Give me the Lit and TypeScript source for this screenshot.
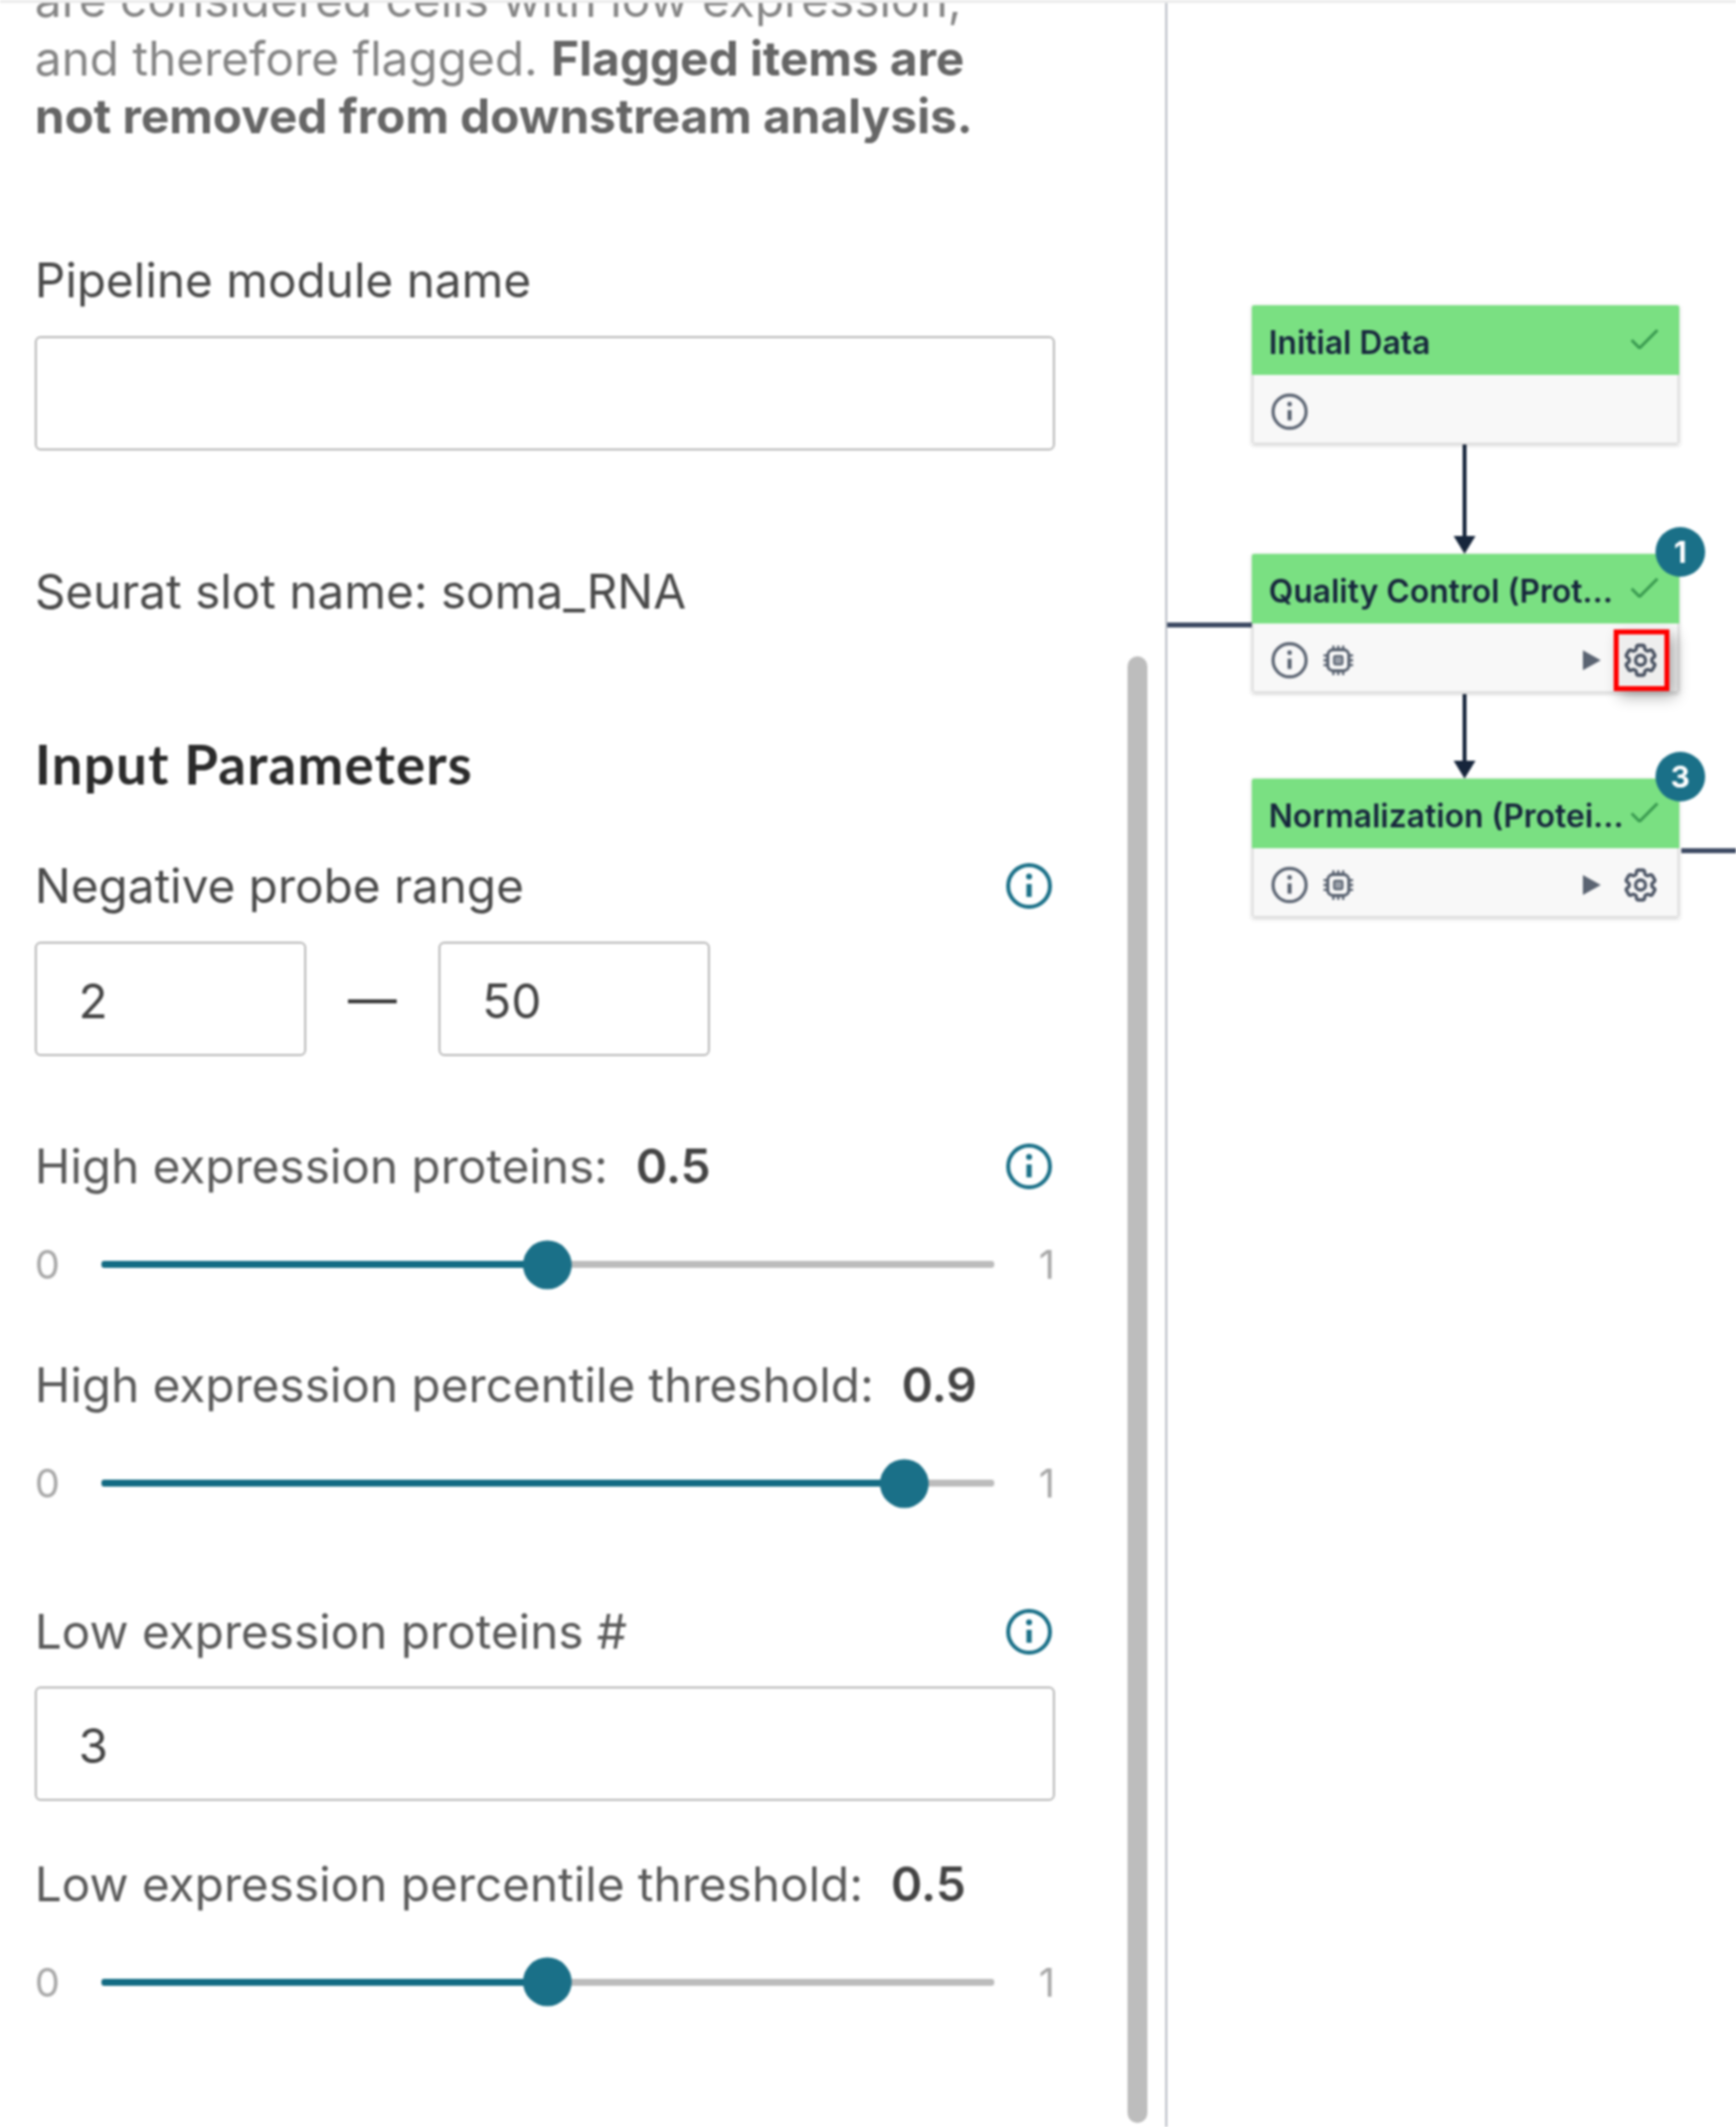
import { LitElement, html, css, svg } from "lit";
import { customElement } from "lit/decorators.js";
import { styleMap } from "lit/directives/style-map.js";

const infoIcon = (cls: string) => html`<svg class=${cls} viewBox="0 0 24 24" fill="none" stroke="currentColor" stroke-width="2">
  <circle cx="12" cy="12" r="10.5"></circle>
  <path d="M12 11v6.5" stroke-width="2.6"></path>
  <circle cx="12" cy="7.2" r="1.5" fill="currentColor" stroke="none"></circle>
</svg>`;

const chipIcon = html`<svg class="chip" viewBox="0 0 24 24" fill="none" stroke="#5b6472" stroke-width="2.2">
  <rect x="4.5" y="4.5" width="15" height="15" rx="4"></rect>
  <rect x="9" y="9" width="6" height="6" rx="1" fill="#9aa0aa" stroke-width="1.4"></rect>
  <path d="M8.5 1.5v3M12 1.5v3M15.5 1.5v3M8.5 19.5v3M12 19.5v3M15.5 19.5v3M1.5 8.5h3M1.5 12h3M1.5 15.5h3M19.5 8.5h3M19.5 12h3M19.5 15.5h3" stroke-width="1.6"></path>
</svg>`;

const gearIcon = html`<svg class="gear" viewBox="0 0 24 24" fill="none" stroke="#4d5666" stroke-width="2">
  <path d="M9.594 3.94c.09-.542.56-.94 1.11-.94h2.593c.55 0 1.02.398 1.11.94l.213 1.281c.063.374.313.686.645.87.074.04.147.083.22.127.325.196.72.257 1.075.124l1.217-.456a1.125 1.125 0 0 1 1.37.49l1.296 2.247a1.125 1.125 0 0 1-.26 1.431l-1.003.827c-.293.241-.438.613-.43.992a7.723 7.723 0 0 1 0 .255c-.008.378.137.75.43.991l1.004.827c.424.35.534.955.26 1.43l-1.298 2.247a1.125 1.125 0 0 1-1.369.491l-1.217-.456c-.355-.133-.75-.072-1.076.124a6.47 6.47 0 0 1-.22.128c-.331.183-.581.495-.644.869l-.213 1.281c-.09.543-.56.94-1.11.94h-2.594c-.55 0-1.019-.398-1.11-.94l-.213-1.281c-.062-.374-.312-.686-.644-.87a6.52 6.52 0 0 1-.22-.127c-.325-.196-.72-.257-1.076-.124l-1.217.456a1.125 1.125 0 0 1-1.369-.49l-1.297-2.247a1.125 1.125 0 0 1 .26-1.431l1.004-.827c.292-.24.437-.613.43-.991a6.932 6.932 0 0 1 0-.255c.007-.38-.138-.751-.43-.992l-1.004-.827a1.125 1.125 0 0 1-.26-1.43l1.297-2.247a1.125 1.125 0 0 1 1.37-.491l1.216.456c.356.133.751.072 1.076-.124.072-.044.146-.086.22-.128.332-.183.582-.495.644-.869l.214-1.28Z"></path>
  <circle cx="12" cy="12" r="3"></circle>
</svg>`;

const playIcon = html`<svg class="play" viewBox="0 0 18 20"><path d="M0 0l18 10L0 20z" fill="#5b6472"></path></svg>`;
const checkIcon = html`<svg class="check" viewBox="0 0 28 20" fill="none" stroke="#3a9a50" stroke-width="3"><path d="M1 11l8 8L27 1"></path></svg>`;

interface NodeData { title: string; top: number; full: boolean; badge?: string; marked?: boolean; }
const NODES: NodeData[] = [
  { title: "Initial Data", top: 307, full: false },
  { title: "Quality Control (Prot...", top: 557, full: true, badge: "1", marked: true },
  { title: "Normalization (Protei...", top: 783, full: true, badge: "3" },
];
const ARROWS = [{ x: 1473 - 1174, top: 447, h: 110 }, { x: 1473 - 1174, top: 698, h: 85 }];

@customElement("app-root")
export class AppRoot extends LitElement {
  static styles = css`
    :host { display: flex; width: 1746px; height: 2139px; overflow: hidden; background: #fff;
      font-family: Inter, "Liberation Sans", sans-serif; position: relative; filter: blur(0.9px); }
    .topline { position: absolute; left: 0; right: 0; top: 0; height: 3px; background: #ececec; z-index: 3; }
    .panel { width: 1174px; flex: none; height: 100%; box-sizing: border-box; border-right: 2px solid #b8bcc4;
      overflow: hidden; position: relative; padding: 0 0 0 35px; }
    .form { width: 1026px; display: flex; flex-direction: column; }
    .desc { margin: -29px 0 0; font-size: 48px; line-height: 58.6px; color: #858585; white-space: nowrap; }
    .desc b { color: #666; font-weight: 700; }
    .label { display: flex; align-items: center; justify-content: space-between; height: 48px;
      font-size: 48px; line-height: 48px; color: #5a5a5a; white-space: nowrap; }
    .label.dark { color: #4a4a4a; }
    .label b { color: #444; font-weight: 600; margin-left: 28px; }
    .label span { display: block; letter-spacing: -0.03px; }
    h3 { margin: 0; font: 700 55px/48px Lato, sans-serif; letter-spacing: 1.2px; color: #2b2b2b; }
    .field { box-sizing: border-box; height: 115px; border: 2px solid #b8b8b8; border-radius: 6px;
      font-size: 48px; color: #444; padding: 4px 42px 0; display: flex; align-items: center; background: #fff; }
    .range { display: flex; align-items: center; margin-top: 32px; }
    .range .field { width: 273px; }
    .dash { width: 49px; height: 4px; background: #3a3a3a; margin: 6px 42px 0 42px; }
    .slider { display: flex; align-items: center; height: 50px; margin-top: 49px; font-size: 40px; color: #a8a8a8; }
    .slider .end { width: 67px; flex: none; }
    .slider .end.right { width: 61px; text-align: right; }
    .track { flex: 1; height: 7px; background: #bcbcbc; border-radius: 3px; position: relative; }
    .fill { height: 100%; background: #136c84; border-radius: 3px; }
    .thumb { position: absolute; top: 50%; width: 49px; height: 49px; border-radius: 50%; background: #1a7088;
      transform: translate(-51%, -50%); }
    .info { width: 48px; height: 48px; color: #1a7088; flex: none; margin-right: 2px; }
    .m111 { margin-top: 111px; } .m32 { margin-top: 32px; } .m31 { margin-top: 31px; } .m118 { margin-top: 118px; } .m125 { margin-top: 125px; }
    .m75 { margin-top: 75px; } .m87 { margin-top: 87px; } .m1 { padding-top: 1px; } .m72 { margin-top: 72px; }
    .m100 { margin-top: 100.5px; } .m60 { margin-top: 60px; }
    .scroll { position: absolute; left: 1134px; top: 660px; width: 20px; bottom: 4px; background: #bdbdbd; border-radius: 10px; }

    .canvas { flex: 1; position: relative; }
    .stub { position: absolute; height: 5px; background: #3d4a63; }
    .stub.l { left: 0; width: 85px; top: 626px; }
    .stub.r { left: 517px; right: 0; top: 853px; }
    .arrow { position: absolute; width: 24px; overflow: visible; }
    .node { position: absolute; left: 85px; width: 430px; box-shadow: 0 1px 4px rgba(0,0,0,.18); }
    .head { box-sizing: border-box; height: 70px; background: #7ae082; display: flex; align-items: center;
      padding: 0 21px 0 17px; justify-content: space-between; border-radius: 2px 2px 0 0; }
    .title { font-size: 32px; font-weight: 600; color: #17263c; white-space: nowrap; margin-top: 4px; }
    .check { width: 28px; height: 20px; flex: none; margin-top: -2px; }
    .body { box-sizing: border-box; height: 70px; background: #f8f8f8; border: 2px solid #e0e0e0; border-top: 0;
      border-radius: 0 0 3px 3px; display: flex; align-items: center; padding: 6px 19px 0 17px; position: relative; }
    .body .info { width: 38px; height: 38px; color: #5b6472; margin: 0; }
    .chip { width: 34px; height: 34px; margin-left: 13px; }
    .grow { flex: 1; }
    .play { width: 18px; height: 20px; margin-right: 22px; }
    .gearwrap { width: 36px; height: 36px; display: flex; position: relative; }
    .gear { width: 40px; height: 40px; margin: -2px; }
    .mark { position: absolute; inset: -13px -11px -13px -9px; border: 5px solid #f00; background: rgba(0,0,0,.04); box-shadow: 6px 6px 14px rgba(0,0,0,.3); pointer-events: none; }
    .badge { position: absolute; right: -26px; top: -27.5px; width: 50px; height: 50px; border-radius: 50%;
      background: #1a7088; color: #fff; font-size: 30px; font-weight: 700; display: flex; align-items: center; justify-content: center; }
  `;

  private slider(pct: number) {
    return html`<div class="slider">
      <div class="end">0</div>
      <div class="track">
        <div class="fill" style=${styleMap({ width: pct + "%" })}></div>
        <div class="thumb" style=${styleMap({ left: pct + "%" })}></div>
      </div>
      <div class="end right">1</div>
    </div>`;
  }

  private node(n: NodeData) {
    return html`<div class="node" style=${styleMap({ top: n.top + "px" })}>
      <div class="head"><span class="title">${n.title}</span>${checkIcon}</div>
      <div class="body">
        ${infoIcon("info")}
        ${n.full ? html`${chipIcon}<div class="grow"></div>${playIcon}
          <div class="gearwrap">${gearIcon}${n.marked ? html`<div class="mark"></div>` : ""}</div>` : ""}
      </div>
      ${n.badge ? html`<div class="badge">${n.badge}</div>` : ""}
    </div>`;
  }

  render() {
    return html`
      <div class="topline"></div>
      <div class="panel">
        <div class="form">
          <p class="desc">are considered cells with low expression,<br>and therefore flagged. <b>Flagged items are<br>not removed from downstream analysis.</b></p>
          <div class="label dark m111"><span>Pipeline module name</span></div>
          <div class="field m32"></div>
          <div class="label dark m118"><span>Seurat slot name: soma_RNA</span></div>
          <h3 class="m125">Input Parameters</h3>
          <div class="label dark m75"><span>Negative probe range</span>${infoIcon("info")}</div>
          <div class="range"><div class="field">2</div><div class="dash"></div><div class="field">50</div></div>
          <div class="label m87"><span>High expression proteins:<b>0.5</b></span>${infoIcon("info")}</div>
          <div class="m1">${this.slider(50)}</div>
          <div class="label m72"><span>High expression percentile threshold:<b>0.9</b></span></div>
          <div class="m1">${this.slider(90)}</div>
          <div class="label m100"><span>Low expression proteins #</span>${infoIcon("info")}</div>
          <div class="field m31">3</div>
          <div class="label m60"><span>Low expression percentile threshold:<b>0.5</b></span></div>
          ${this.slider(50)}
        </div>
        <div class="scroll"></div>
      </div>
      <div class="canvas">
        <div class="stub l"></div>
        <div class="stub r"></div>
        ${ARROWS.map(a => html`<svg class="arrow" viewBox="0 0 24 ${a.h}" height=${a.h}
            style=${styleMap({ left: a.x - 12 + "px", top: a.top + "px" })}>
          ${svg`<path d=${`M12 0V${a.h - 10}`} stroke="#17263c" stroke-width="4"></path>
          <path d=${`M1 ${a.h - 18}L23 ${a.h - 18}L12 ${a.h}z`} fill="#17263c"></path>`}
        </svg>`)}
        ${NODES.map(n => this.node(n))}
      </div>
    `;
  }
}
